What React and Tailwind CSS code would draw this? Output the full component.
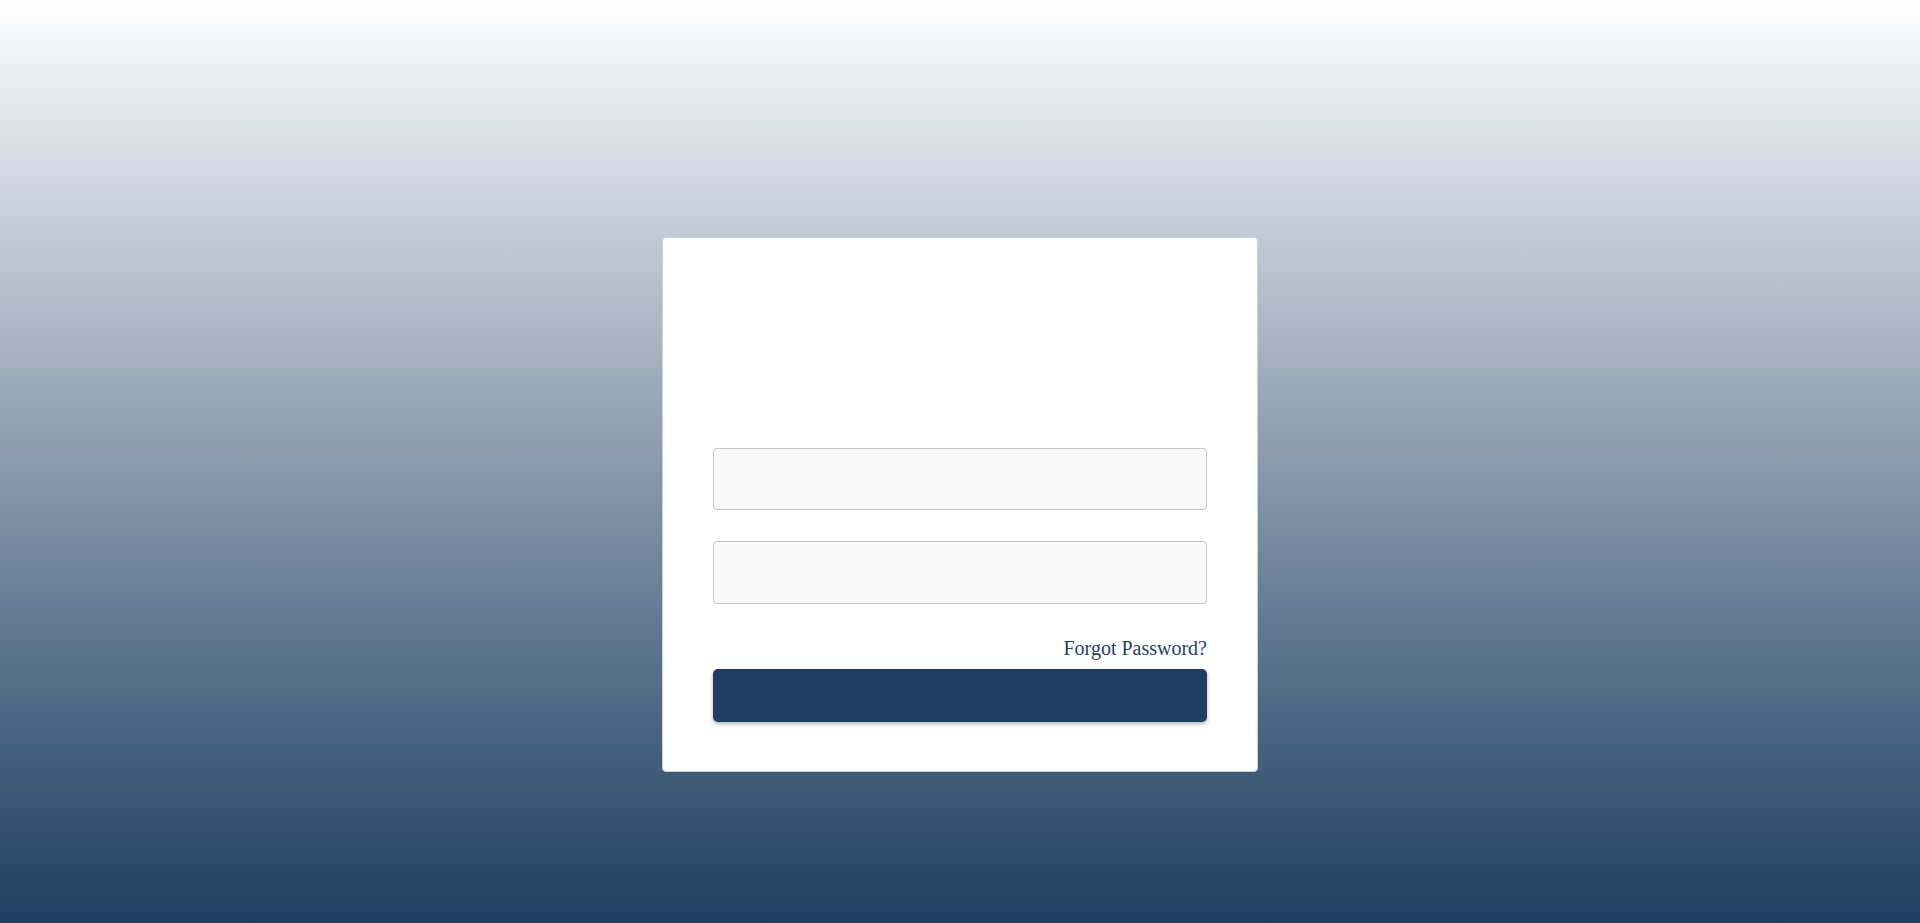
import React from 'react';

const App = () => {
    return (
        <div className="min-h-screen w-full bg-gradient-to-b from-white to-[#1e3f60] flex justify-center pt-[237px]">
            <div className="w-[596px] h-[535px] bg-white rounded-[4px] border border-[#bcd3e8] px-[50px] pt-[210px] flex flex-col">
                <input
                    type="text"
                    className="w-full h-[62px] bg-[#f9f9f9] border border-[#c4c4c4] rounded-[4px] px-3 outline-none"
                />
                <input
                    type="password"
                    className="mt-[31px] w-full h-[63px] bg-[#f9f9f9] border border-[#c4c4c4] rounded-[4px] px-3 outline-none"
                />

                <div className="mt-[33px] text-right">
                    <a
                        href="#"
                        className="text-[20px] leading-[23px] text-[#1e3f5f]"
                        style={{ fontFamily: '"Liberation Serif", "Times New Roman", serif' }}
                    >
                        Forgot Password?
                    </a>
                </div>

                <button className="mt-[8px] w-full h-[53px] bg-[#1e3f60] rounded-[5px] shadow-[0_2px_4px_rgba(0,0,0,0.3)]" />
            </div>
        </div>
    );
};

export default App;
